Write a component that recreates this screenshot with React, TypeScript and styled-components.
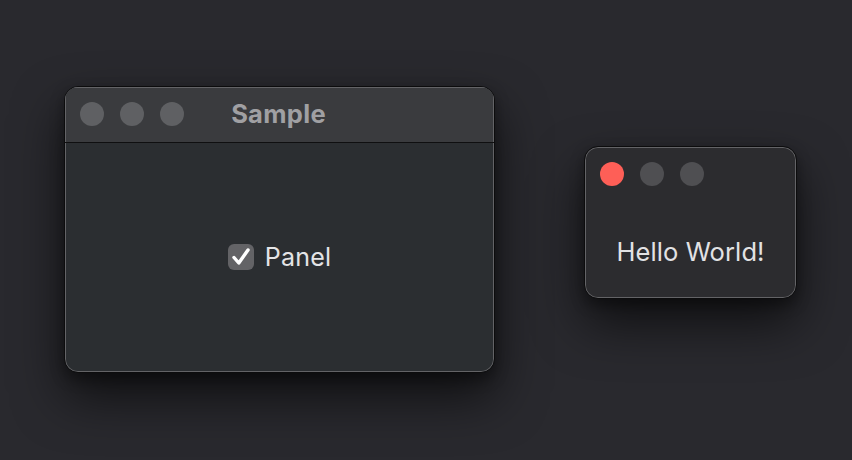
import styled, { createGlobalStyle } from 'styled-components';

const GlobalStyle = createGlobalStyle`
  html, body {
    margin: 0;
    padding: 0;
    background: #29292e;
    font-family: Inter, "Noto Sans", "Liberation Sans", sans-serif;
  }
`;

const Desktop = styled.div`
  position: relative;
  width: 852px;
  height: 460px;
  overflow: hidden;
  background: #29292e;
`;

const Window = styled.div<{ $x: number; $y: number; $w: number; $h: number; $bg: string }>`
  position: absolute;
  left: ${(p) => p.$x}px;
  top: ${(p) => p.$y}px;
  width: ${(p) => p.$w}px;
  height: ${(p) => p.$h}px;
  box-sizing: border-box;
  display: flex;
  flex-direction: column;
  background: ${(p) => p.$bg};
  border-radius: 14px;
  border: 1px solid #0c0c0d;
  box-shadow: inset 0 0 0 1px #636366, 0 24px 50px rgba(0, 0, 0, 0.62), 0 6px 14px rgba(0, 0, 0, 0.35);
  overflow: hidden;
`;

const TitleBar = styled.div`
  position: relative;
  height: 55px;
  flex-shrink: 0;
  display: flex;
  align-items: center;
  justify-content: center;
  background: #3a3b3e;
  border-bottom: 1px solid #0f0f10;
  box-shadow: inset 1px 1px 0 #636366, inset -1px 0 0 #636366;
`;

const Lights = styled.div<{ $top?: number }>`
  position: absolute;
  left: 15px;
  top: ${(p) => p.$top ?? 15}px;
  display: flex;
  gap: 16px;
`;

const Light = styled.span<{ $color: string }>`
  width: 24px;
  height: 24px;
  border-radius: 50%;
  background: ${(p) => p.$color};
`;

const Title = styled.div`
  font-size: 25.5px;
  font-weight: 700;
  color: #a0a0a3;
  letter-spacing: 0.3px;
  margin-left: -2px;
  margin-top: -3px;
`;

const Body = styled.div`
  flex: 1;
  display: flex;
  align-items: center;
  justify-content: center;
  padding-bottom: 2px;
`;

const CheckRow = styled.label`
  display: flex;
  align-items: center;
  gap: 11px;
  font-size: 25px;
  color: #e4e4e6;
  letter-spacing: 0.2px;
`;

const Box = styled.span`
  width: 26px;
  height: 26px;
  border-radius: 6px;
  background: #636366;
  display: flex;
  align-items: center;
  justify-content: center;
`;

const SmallBody = styled.div`
  flex: 1;
  display: flex;
  align-items: center;
  justify-content: center;
  padding-top: 58px;
`;

const Hello = styled.div`
  font-size: 25.5px;
  color: #e2e2e4;
  letter-spacing: 0.1px;
`;

export default function App() {
  return (
    <>
      <GlobalStyle />
      <Desktop>
        <Window $x={64} $y={86} $w={431} $h={287} $bg="#2b2e31">
          <TitleBar>
            <Lights $top={15}>
              <Light $color="#5f6063" />
              <Light $color="#5f6063" />
              <Light $color="#5f6063" />
            </Lights>
            <Title>Sample</Title>
          </TitleBar>
          <Body>
            <CheckRow>
              <Box>
                <svg width="22" height="22" viewBox="0 0 22 22">
                  <path d="M4 11.5 L8.8 17 L18 4" fill="none" stroke="#ffffff" strokeWidth="3.4" strokeLinecap="round" strokeLinejoin="round" />
                </svg>
              </Box>
              Panel
            </CheckRow>
          </Body>
        </Window>
        <Window $x={584} $y={146} $w={213} $h={153} $bg="#2c2c2f">
          <Lights $top={15}>
            <Light $color="#fe5f57" />
            <Light $color="#4f4f52" />
            <Light $color="#4f4f52" />
          </Lights>
          <SmallBody>
            <Hello>Hello World!</Hello>
          </SmallBody>
        </Window>
      </Desktop>
    </>
  );
}
